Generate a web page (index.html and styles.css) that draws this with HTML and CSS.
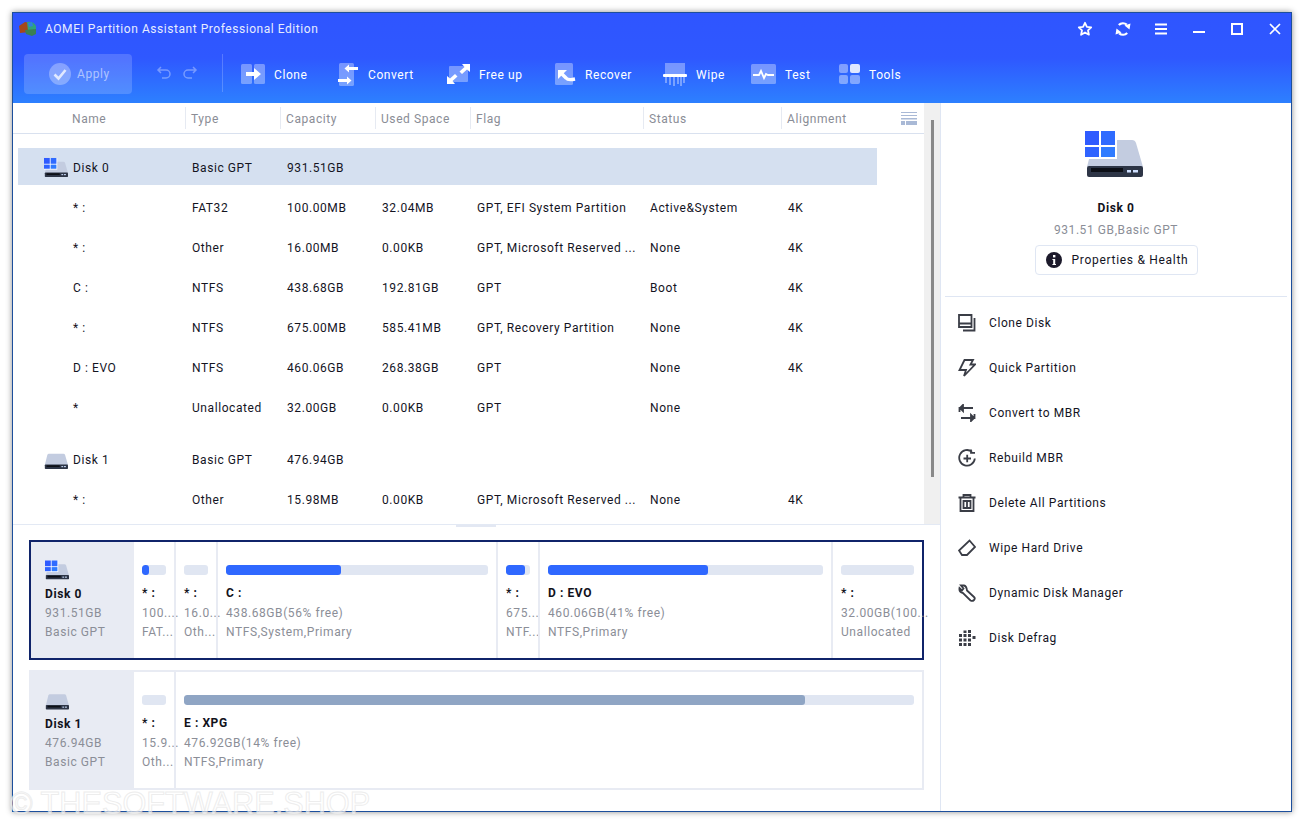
FILE: index.html
```html
<!DOCTYPE html>
<html>
  <head>
    <title>AOMEI Partition Assistant Professional Edition</title>
    <meta name="viewport" content="width=device-width, initial-scale=1.0" />
    <link rel="stylesheet" href="styles.css">
  </head>

  <body>
    <svg class="defs" width="0" height="0">
      <symbol id="disk-plain" viewBox="0 0 58 46">
        <path d="M2 36 L8 12 Q9 9 12 9 H47 Q50 9 51 12 L58 36 Z" fill="#c3cce0"/>
        <rect x="2" y="35" width="56" height="11" rx="2" fill="#2d3546"/>
        <rect x="6" y="37" width="32" height="4" fill="#0c0f16"/>
        <rect x="42" y="39" width="4" height="2.5" fill="#cfe0ff"/>
        <rect x="48" y="39" width="5" height="2.5" fill="#cfe0ff"/>
      </symbol>
      <symbol id="disk-win" viewBox="0 0 58 46">
        <use href="#disk-plain" width="58" height="46"/>
        <rect x="0" y="0" width="32" height="28" fill="#fff"/>
        <rect x="0" y="0" width="14" height="14" fill="#2f5bff"/>
        <rect x="16" y="0" width="14" height="14" fill="#2f6bff"/>
        <rect x="0" y="16" width="14" height="10" fill="#2f63ff"/>
        <rect x="16" y="16" width="14" height="10" fill="#2f7bff"/>
      </symbol>
    </svg>

    <div class="window">
      <header class="top">
        <div class="titlebar">
          <svg class="logo" width="18" height="16" viewBox="0 0 18 16">
            <path d="M0 5 L6 1 L11 2 L11 11 L1 12 Z" fill="#a5481c"/>
            <path d="M8 1 Q14 0 17 5 L17 10 L9 10 Z" fill="#2fa27c"/>
            <path d="M6 9 L17 8 L17 13 L13 15 L7 13 Z" fill="#3a7f55"/>
            <path d="M9 2 L13 1 L14 5 L10 6 Z" fill="#2f7fe0"/>
          </svg>
          <span class="app-name">AOMEI Partition Assistant Professional Edition</span>
          <div class="win-controls">
            <svg width="16" height="16" viewBox="0 0 16 16"><path d="M8 1.8 L9.9 5.8 L14.2 6.3 L11 9.3 L11.9 13.7 L8 11.5 L4.1 13.7 L5 9.3 L1.8 6.3 L6.1 5.8 Z" fill="none" stroke="#fff" stroke-width="1.8" stroke-linejoin="round"/></svg>
            <svg width="16" height="16" viewBox="0 0 16 16"><path d="M3.8 4 A6 6 0 0 1 11.8 3.6 M12.2 12 A6 6 0 0 1 4.2 12.4" fill="none" stroke="#fff" stroke-width="2.2"/><path d="M9.5 4.5 L15.5 2.5 L14.5 8.5 Z M6.5 11.5 L0.5 13.5 L1.5 7.5 Z" fill="#fff"/></svg>
            <svg width="16" height="16" viewBox="0 0 16 16"><path d="M2 3.5 H14 M2 8 H14 M2 12.5 H14" stroke="#fff" stroke-width="2"/></svg>
            <svg width="16" height="16" viewBox="0 0 16 16"><path d="M2 11 H14" stroke="#fff" stroke-width="2"/></svg>
            <svg width="16" height="16" viewBox="0 0 16 16"><rect x="3" y="3" width="10" height="10" fill="none" stroke="#fff" stroke-width="2"/></svg>
            <svg width="16" height="16" viewBox="0 0 16 16"><path d="M3 3 L13 13 M13 3 L3 13" stroke="#fff" stroke-width="1.7"/></svg>
          </div>
        </div>

        <div class="toolbar">
          <button class="apply">
            <svg width="22" height="22" viewBox="0 0 22 22"><circle cx="11" cy="11" r="11" fill="#fff" fill-opacity=".3"/><path d="M5.5 11.5 L9.5 15.5 L16.5 7" fill="none" stroke="#fff" stroke-opacity=".75" stroke-width="2.6"/></svg>
            <span>Apply</span>
          </button>
          <div class="history">
            <svg width="16" height="16" viewBox="0 0 16 16"><path d="M5 2 L2 5 L5 8 M2 5 H10 A4 4 0 0 1 10 13 H6" fill="none" stroke="#fff" stroke-opacity=".35" stroke-width="1.5"/></svg>
            <svg width="16" height="16" viewBox="0 0 16 16"><path d="M11 2 L14 5 L11 8 M14 5 H6 A4 4 0 0 0 6 13 H10" fill="none" stroke="#fff" stroke-opacity=".35" stroke-width="1.5"/></svg>
          </div>
          <div class="tools">
            <div class="tool">
              <svg width="24" height="20" viewBox="0 0 24 20"><rect x="0" y="0" width="11" height="20" rx="1.5" fill="#fff" fill-opacity=".35"/><rect x="13" y="0" width="11" height="20" rx="1.5" fill="#fff" fill-opacity=".35"/><path d="M5 8 H13 V4 L20 10 L13 16 V12 H5 Z" fill="#fff"/></svg>
              <span>Clone</span>
            </div>
            <div class="tool">
              <svg width="21" height="23" viewBox="0 0 21 23"><rect x="1" y="0" width="15" height="23" rx="1.5" fill="#fff" fill-opacity=".35"/><path d="M20 4 H11 V1.5 L6.5 5.5 L11 9.5 V7 H20 Z M0 16 H9 V13.5 L13.5 17.5 L9 21.5 V19 H0 Z" fill="#fff"/></svg>
              <span>Convert</span>
            </div>
            <div class="tool">
              <svg width="23" height="20" viewBox="0 0 23 20"><rect x="2" y="2" width="19" height="16" rx="1" fill="#fff" fill-opacity=".35"/><path d="M23 0 V8 L20 5.5 L15 10 L12.5 7.5 L17.5 3 L15 0 Z M0 20 V12 L3 14.5 L8 10 L10.5 12.5 L5.5 17 L8 20 Z" fill="#fff"/></svg>
              <span>Free up</span>
            </div>
            <div class="tool">
              <svg width="21" height="22" viewBox="0 0 21 22"><rect x="0" y="0" width="18" height="22" rx="1.5" fill="#fff" fill-opacity=".35"/><path d="M3 7 H12 L3 16 Z" fill="#fff"/><path d="M6 10 L11 15 Q13 17.5 20 16" fill="none" stroke="#fff" stroke-width="3.4"/></svg>
              <span>Recover</span>
            </div>
            <div class="tool">
              <svg width="24" height="23" viewBox="0 0 24 23"><rect x="2" y="0" width="20" height="11" fill="#fff" fill-opacity=".35"/><rect x="0" y="11" width="24" height="3" rx="1" fill="#fff"/><path d="M3 14 V20 M7 14 V22 M11 14 V23 M15 14 V21 M18 14 V23 M21 14 V20" stroke="#fff" stroke-opacity=".45" stroke-width="1.6"/></svg>
              <span>Wipe</span>
            </div>
            <div class="tool">
              <svg width="25" height="20" viewBox="0 0 25 20"><rect x="0" y="0" width="25" height="20" rx="1.5" fill="#fff" fill-opacity=".35"/><path d="M2 11 H8 L10 7 L13 14 L15 10 L17 11 H23" fill="none" stroke="#fff" stroke-width="1.8"/></svg>
              <span>Test</span>
            </div>
            <div class="tool">
              <svg width="21" height="20" viewBox="0 0 21 20"><rect x="0" y="0" width="9" height="9" rx="2" fill="#fff" fill-opacity=".4"/><rect x="11" y="0" width="10" height="9" rx="2" fill="#fff" fill-opacity=".85"/><rect x="0" y="11" width="9" height="9" rx="2" fill="#fff" fill-opacity=".4"/><rect x="11" y="11" width="10" height="9" rx="2" fill="#fff" fill-opacity=".4"/></svg>
              <span>Tools</span>
            </div>
          </div>
        </div>
      </header>

      <div class="main">
        <div class="left">
          <div class="list-pane">
            <div class="list">
              <div class="list-head">
                <div class="first">Name</div>
                <div>Type</div>
                <div>Capacity</div>
                <div>Used Space</div>
                <div>Flag</div>
                <div>Status</div>
                <div>Alignment</div>
                <svg class="col-icon" width="16" height="13" viewBox="0 0 16 13"><path d="M0 0.5 H16 M0 3.5 H16" stroke="#a9b9d6"/><rect x="0" y="6" width="16" height="1.5" fill="#a9b9d6"/><rect x="0" y="9" width="4" height="4" fill="#a9b9d6"/><rect x="5" y="9" width="11" height="4" fill="#a9b9d6"/></svg>
              </div>

              <div class="rows">
                <div class="row disk-row selected">
                  <div class="name"><svg width="24" height="21"><use href="#disk-win"/></svg>Disk 0</div>
                  <div>Basic GPT</div><div>931.51GB</div>
                </div>
                <div class="row"><div class="name">* :</div><div>FAT32</div><div>100.00MB</div><div>32.04MB</div><div>GPT, EFI System Partition</div><div>Active&amp;System</div><div>4K</div></div>
                <div class="row"><div class="name">* :</div><div>Other</div><div>16.00MB</div><div>0.00KB</div><div>GPT, Microsoft Reserved ...</div><div>None</div><div>4K</div></div>
                <div class="row"><div class="name">C :</div><div>NTFS</div><div>438.68GB</div><div>192.81GB</div><div>GPT</div><div>Boot</div><div>4K</div></div>
                <div class="row"><div class="name">* :</div><div>NTFS</div><div>675.00MB</div><div>585.41MB</div><div>GPT, Recovery Partition</div><div>None</div><div>4K</div></div>
                <div class="row"><div class="name">D : EVO</div><div>NTFS</div><div>460.06GB</div><div>268.38GB</div><div>GPT</div><div>None</div><div>4K</div></div>
                <div class="row"><div class="name">*</div><div>Unallocated</div><div>32.00GB</div><div>0.00KB</div><div>GPT</div><div>None</div><div></div></div>
                <div class="row disk-row">
                  <div class="name"><svg width="24" height="21"><use href="#disk-plain"/></svg>Disk 1</div>
                  <div>Basic GPT</div><div>476.94GB</div>
                </div>
                <div class="row"><div class="name">* :</div><div>Other</div><div>15.98MB</div><div>0.00KB</div><div>GPT, Microsoft Reserved ...</div><div>None</div><div>4K</div></div>
              </div>
            </div>
            <div class="scrollbar"><div class="thumb"></div></div>
          </div>

          <div class="map-pane">
            <div class="splitter"></div>

            <div class="card active">
              <div class="card-disk">
                <svg width="24" height="20"><use href="#disk-win"/></svg>
                <b>Disk 0</b>
                <span>931.51GB</span>
                <span>Basic GPT</span>
              </div>
              <div class="part w40">
                <div class="bar"><i class="fill fill-s1"></i></div>
                <b>* :</b><span>100....</span><span>FAT...</span>
              </div>
              <div class="part w40">
                <div class="bar"></div>
                <b>* :</b><span>16.0...</span><span>Oth...</span>
              </div>
              <div class="part w279">
                <div class="bar"><i class="fill fill-c"></i></div>
                <b>C :</b><span>438.68GB(56% free)</span><span>NTFS,System,Primary</span>
              </div>
              <div class="part w39">
                <div class="bar"><i class="fill fill-s2"></i></div>
                <b>* :</b><span>675...</span><span>NTF...</span>
              </div>
              <div class="part w291">
                <div class="bar"><i class="fill fill-d"></i></div>
                <b>D : EVO</b><span>460.06GB(41% free)</span><span>NTFS,Primary</span>
              </div>
              <div class="part grow">
                <div class="bar"></div>
                <b>* :</b><span>32.00GB(100...</span><span>Unallocated</span>
              </div>
            </div>

            <div class="card">
              <div class="card-disk">
                <svg width="24" height="20"><use href="#disk-plain"/></svg>
                <b>Disk 1</b>
                <span>476.94GB</span>
                <span>Basic GPT</span>
              </div>
              <div class="part w40">
                <div class="bar"></div>
                <b>* :</b><span>15.9...</span><span>Oth...</span>
              </div>
              <div class="part grow">
                <div class="bar"><i class="fill fill-e"></i></div>
                <b>E : XPG</b><span>476.92GB(14% free)</span><span>NTFS,Primary</span>
              </div>
            </div>
          </div>
        </div>

        <aside class="side">
          <div class="side-head">
            <svg class="big-disk" width="58" height="46"><use href="#disk-win"/></svg>
            <b>Disk 0</b>
            <span>931.51 GB,Basic GPT</span>
            <button class="props">
              <svg width="16" height="16" viewBox="0 0 16 16"><circle cx="8" cy="8" r="8" fill="#1c1a2b"/><rect x="7" y="3" width="2.4" height="2.4" fill="#fff"/><path d="M6.4 7 H9.2 V12 H10 V13 H6.4 V12 H7.2 V8 H6.4 Z" fill="#fff"/></svg>
              Properties &amp; Health
            </button>
          </div>
          <ul class="actions">
            <li><svg viewBox="0 0 18 18"><path d="M1 1 H13.5 V13 H1 Z M1 9.5 H13.5 M16.5 4 V16.5 H5" /></svg>Clone Disk</li>
            <li><svg viewBox="0 0 18 18"><path d="M6.5 1 H15 L12.5 5.5 H17 L6 17 L8 11 H1.5 Z"/></svg>Quick Partition</li>
            <li><svg viewBox="0 0 18 18"><path d="M1.5 8 V4 H15 M13 11 L16 14 L13 17 Z M16.5 10 V14 H3 M5 1 L2 4 L5 7 Z"/></svg>Convert to MBR</li>
            <li><svg viewBox="0 0 18 18"><path d="M14 2.8 A7.8 7.8 0 1 0 16.8 9.5 M5.5 9.5 H13 M9.2 5.8 V13.2 M13 0.5 V3.8 H17"/></svg>Rebuild MBR</li>
            <li><svg viewBox="0 0 18 18"><path d="M0.5 3.5 H17.5 M5.5 3 V1 H12.5 V3 M2.5 4 V17 H15.5 V4 M5.5 7 H12.5 V14 H5.5 Z M9 7 V14"/></svg>Delete All Partitions</li>
            <li><svg viewBox="0 0 18 18"><path d="M11.5 1.5 L17 8 L9 16 H4 L1 11.5 Z"/></svg>Wipe Hard Drive</li>
            <li><svg viewBox="0 0 18 18"><path d="M6 1.5 L3 1.5 L5.5 4.5 L4 6.5 L1.5 4 Q0.8 8 5 9 L12.5 16.5 Q14.5 17.5 16 16 Q17.5 14.5 16 13 L9 6.5 Q8.5 2 6 1.5 Z"/></svg>Dynamic Disk Manager</li>
            <li><svg class="solid" viewBox="0 0 18 18"><path d="M1 5h3v3H1zM5.5 5h3v3h-3zM5.5 1.5h3v2.5h-3zM10 1h3v3h-3zM10 5h3v3h-3zM14.5 7h3v3h-3zM1 9.5h3v3H1zM5.5 9.5h3v3h-3zM10 9.5h3v3h-3zM1 14h3v3H1zM5.5 14h3v3h-3zM10 14h3v3h-3z"/></svg>Disk Defrag</li>
          </ul>
        </aside>
      </div>
    </div>

    <div class="watermark">© THESOFTWARE.SHOP</div>
  </body>
</html>
```

FILE: styles.css
```css
/* Base */
body {
  margin: 0;
  padding: 12px;
  background-color: #fff;
  font-family: Roboto, "Liberation Sans", sans-serif;
  font-size: 12px;
  letter-spacing: 0.58px;
  color: #14141f;
  overflow: hidden;
}

.defs {
  position: absolute;
}

.window {
  width: 1278px;
  height: 798px;
  border: 1px solid #1d4f9c;
  background-color: #fff;
  box-shadow: 0 0 6px rgba(0, 0, 0, 0.45);
  display: flex;
  flex-direction: column;
}

/* Blue header */
.top {
  height: 90px;
  background: linear-gradient(#2f55ff 0%, #2f58ff 50%, #2d80ff 100%);
  color: #fff;
  flex-shrink: 0;
}

.titlebar {
  height: 32px;
  display: flex;
  align-items: center;
  padding: 0 6px;
}

.logo {
  margin-right: 8px;
}

.app-name {
  letter-spacing: 0.55px;
  color: #e6ecff;
}

.win-controls {
  margin-left: auto;
  display: flex;
  gap: 22px;
  padding-right: 2px;
}

.toolbar {
  display: flex;
  align-items: flex-start;
  padding: 9px 0 0 11px;
}

.apply {
  width: 108px;
  height: 40px;
  display: flex;
  align-items: center;
  gap: 6px;
  padding: 0 0 0 25px;
  border: none;
  border-radius: 4px;
  background-color: rgba(255, 255, 255, 0.17);
  color: rgba(255, 255, 255, 0.55);
  font: inherit;
  letter-spacing: inherit;
}

.history {
  display: flex;
  gap: 10px;
  width: 66px;
  height: 38px;
  margin-left: 24px;
  align-items: center;
}

.tools {
  display: grid;
  grid-template-columns: 97px 109px 108px 108px 88px 88px 100px;
  padding-left: 18px;
  height: 38px;
  border-left: 1px solid rgba(255, 255, 255, 0.2);
  align-items: center;
}

.tool {
  display: flex;
  align-items: center;
  gap: 9px;
  color: #fff;
  height: 40px;
}

.tool span {
  padding-top: 2px;
}

/* Partition list */
.main {
  flex: 1;
  display: flex;
  min-height: 0;
}

.left {
  width: 927px;
  border-right: 1px solid #dfe6f3;
  display: flex;
  flex-direction: column;
}

.list-pane {
  height: 421px;
  display: flex;
  border-bottom: 1px solid #e3e9f4;
}

.list {
  width: 911px;
}

.list-head {
  height: 30px;
  display: grid;
  grid-template-columns: 172px 95px 95px 95px 173px 138px 95px 1fr;
  align-items: center;
  border-bottom: 1px solid #d9e1ef;
  color: #8a8d96;
}

.list-head > div {
  height: 22px;
  line-height: 24px;
  border-left: 1px solid #e6eaf2;
  padding-left: 5px;
}

.list-head > .first {
  border-left: none;
  padding-left: 59px;
}

.col-icon {
  margin-left: 25px;
}

.rows {
  padding-top: 1px;
}

.row {
  height: 40px;
  margin-left: 5px;
  padding-top: 2px;
  box-sizing: border-box;
  display: grid;
  grid-template-columns: 167px 95px 95px 95px 173px 138px 95px;
  align-items: center;
}

.row > div {
  padding-left: 7px;
}

.row > .name {
  padding-left: 55px;
}

.disk-row {
  height: 37px;
  width: 859px;
  margin-top: 13px;
  margin-bottom: 2px;
}

.disk-row > .name {
  display: flex;
  align-items: center;
  gap: 5px;
  padding-left: 26px;
}

.selected {
  background-color: #d5e0f0;
}

.scrollbar {
  width: 16px;
  background-color: #f0f0f0;
  position: relative;
}

.thumb {
  position: absolute;
  left: 7px;
  top: 17px;
  width: 3px;
  height: 357px;
  background-color: #8a8a8a;
}

/* Disk map */
.map-pane {
  flex: 1;
  padding: 15px 16px 0;
  position: relative;
}

.splitter {
  position: absolute;
  left: 443px;
  top: 0;
  width: 40px;
  height: 2px;
  background-color: #e3e8f3;
}

.card {
  height: 116px;
  border: 2px solid #e8ebf3;
  display: flex;
  margin-bottom: 10px;
  color: #8b8e97;
}

.card.active {
  border-color: #10246a;
}

.card b {
  color: #12121c;
  font-weight: 700;
  display: block;
  line-height: 19px;
}

.card span {
  display: block;
  line-height: 19px;
  white-space: nowrap;
}

.card-disk {
  width: 89px;
  padding: 18px 0 0 14px;
  background-color: #e8ebf3;
  flex-shrink: 0;
}

.card-disk svg {
  display: block;
  margin-bottom: 5px;
}

.part {
  padding: 23px 8px 0;
  border-left: 2px solid #e8ebf3;
  box-sizing: border-box;
  flex-shrink: 0;
}

.part b {
  margin-bottom: 1px;
}

.card-disk + .part {
  border-left: none;
}

.w40 {
  width: 42px;
}

.card-disk + .w40 {
  width: 40px;
}

.w279 {
  width: 280px;
}

.w39 {
  width: 42px;
}

.w291 {
  width: 293px;
}

.grow {
  flex: 1;
  min-width: 0;
}

.bar {
  height: 10px;
  background-color: #e0e6f2;
  border-radius: 3px;
  margin-bottom: 9px;
  overflow: hidden;
}

.fill {
  display: block;
  height: 100%;
  background-color: #2f68ff;
  border-radius: 3px;
}

.fill-s1 {
  width: 30%;
}

.fill-c {
  width: 44%;
}

.fill-s2 {
  width: 80%;
}

.fill-d {
  width: 58%;
}

.fill-e {
  width: 85%;
  background-color: #8fa5c4;
}

/* Right side panel */
.side {
  flex: 1;
  min-width: 0;
}

.side-head {
  margin: 0 4px;
  height: 194px;
  border-bottom: 1px solid #dfe6f3;
  box-sizing: border-box;
  display: flex;
  flex-direction: column;
  align-items: center;
  padding-top: 28px;
}

.side-head svg {
  flex-shrink: 0;
}

.big-disk {
  margin-right: 4px;
}

.side-head b {
  margin-top: 24px;
  color: #12121c;
}

.side-head span {
  margin-top: 8px;
  color: #8b8e97;
}

.props {
  margin-top: 8px;
  width: 163px;
  height: 30px;
  display: flex;
  align-items: center;
  gap: 10px;
  padding: 0 0 0 10px;
  background-color: #fff;
  border: 1px solid #dfe6f3;
  border-radius: 4px;
  font: inherit;
  letter-spacing: 0.7px;
  color: #14141f;
}

.actions {
  list-style: none;
  margin: 3px 0 0;
  padding: 0;
}

.actions li {
  height: 45px;
  display: flex;
  align-items: center;
  gap: 13px;
  padding-left: 17px;
}

.actions svg {
  width: 18px;
  height: 18px;
  fill: none;
  stroke: #3a3d46;
  stroke-width: 1.8;
}

.actions svg.solid {
  fill: #3a3d46;
  stroke: none;
}

/* Faint mark over the bottom left corner */
.watermark {
  position: absolute;
  left: 10px;
  top: 786px;
  font-family: "Liberation Sans", sans-serif;
  font-size: 30.7px;
  letter-spacing: 0;
  color: rgba(255, 255, 255, 0.6);
  -webkit-text-stroke: 1px rgba(225, 225, 225, 0.6);
  white-space: nowrap;
}
```
